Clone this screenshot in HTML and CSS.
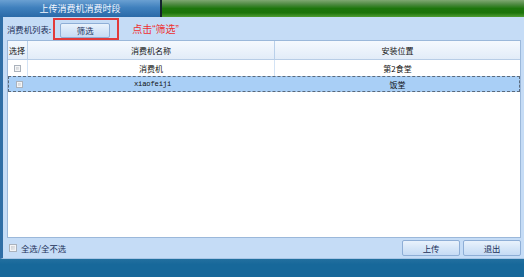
FILE: index.html
```html
<!DOCTYPE html>
<html lang="zh-CN">
<head>
<meta charset="utf-8">
<link rel="stylesheet" href="styles.css">
</head>
<body>
<div class="window">
  <div class="titlebar">
    <div class="tab">上传消费机消费时段</div>
    <div class="sep"></div>
    <div class="green"></div>
  </div>
  <div class="main">
    <div class="toolbar">
      <span class="label">消费机列表:</span>
      <div class="highlight"><button class="btn filter">筛选</button></div>
      <span class="hint">点击<span class="q">“</span>筛选<span class="q">”</span></span>
    </div>
    <div class="grid">
      <div class="row head">
        <div class="cell c1">选择</div>
        <div class="cell c2">消费机名称</div>
        <div class="cell c3">安装位置</div>
      </div>
      <div class="row">
        <div class="cell c1"><span class="chk"></span></div>
        <div class="cell c2">消费机</div>
        <div class="cell c3">第2食堂</div>
      </div>
      <div class="row sel">
        <div class="cell c1"><span class="chk"></span></div>
        <div class="cell c2 mono">xiaofeiji</div>
        <div class="cell c3">饭堂</div>
      </div>
    </div>
    <div class="footer">
      <span class="chk"></span>
      <span class="label all">全选/全不选</span>
      <div class="spacer"></div>
      <button class="btn act">上传</button>
      <button class="btn act">退出</button>
    </div>
  </div>
  <div class="bottom"></div>
</div>
</body>
</html>
```
FILE: styles.css
```css
* { box-sizing: border-box; }
html, body { margin: 0; padding: 0; }
body {
  width: 524px;
  height: 277px;
  overflow: hidden;
  font-family: "Noto Sans CJK SC", "Noto Sans", sans-serif;
  font-size: 8px;
  color: #111;
}
.window {
  display: flex;
  flex-direction: column;
  height: 277px;
}
.titlebar {
  height: 17px;
  display: flex;
}
.tab {
  width: 160px;
  background: linear-gradient(#6aa0d2, #3f80bd 45%, #2a6aa8);
  color: #f4f8ff;
  font-size: 9px;
  line-height: 17px;
  text-align: center;
}
.sep {
  width: 2px;
  background: #14222e;
}
.green {
  flex: 1;
  background: linear-gradient(#7fa872 0%, #4e8a42 25%, #1d760c 50%, #1b740a 75%, #4f9c34 100%);
}
.main {
  flex: 1;
  display: flex;
  flex-direction: column;
  background: #c5dcf6;
  border-left: 3px solid #2f6ea6;
  border-bottom: 1px solid #a8c6e6;
  padding: 0 3px 0 4px;
}
.toolbar {
  height: 23px;
  display: flex;
  align-items: center;
}
.label {
  color: #1b2f58;
  font-size: 8.4px;
}
.highlight {
  align-self: flex-end;
  margin-left: 2px;
  width: 66px;
  height: 22px;
  border: 2px solid #e23a3a;
  padding: 3px 0 0 5px;
}
.btn {
  font-family: "Noto Sans CJK SC", sans-serif;
  font-size: 8.4px;
  color: #1b2f58;
  border: 1px solid #8eaed6;
  border-radius: 2px;
  background: linear-gradient(#e9f2fc, #d6e6f8 50%, #c6dbf4);
  padding: 0;
  line-height: 13px;
}
.filter {
  width: 50px;
  height: 15px;
  display: block;
}
.hint {
  margin-left: 13px;
  color: #ee3030;
  font-size: 10px;
}
.hint .q {
  font-family: "Liberation Sans", sans-serif;
}
.grid {
  height: 198px;
  background: #fff;
  border: 1px solid #9bb8da;
}
.row {
  display: grid;
  grid-template-columns: 20px 247px 1fr;
  height: 16px;
  align-items: center;
}
.row.head {
  height: 19px;
  background: linear-gradient(#f5f9fe, #e2ecf8);
  border-bottom: 1px solid #b8cde6;
}
.cell {
  text-align: center;
  height: 100%;
  display: flex;
  align-items: center;
  justify-content: center;
}
.row.head .c1, .row.head .c2 { border-right: 1px solid #b9d0ea; }
.row:not(.head):not(.sel) .c1, .row:not(.head):not(.sel) .c2 { border-right: 1px solid #d3e3f5; }
.row.head .c1 { justify-content: flex-start; padding-left: 1px; }
.row.sel {
  background: #a9cff6;
  border: 1px dashed #5a6a7c;
  height: 16px;
}
.mono {
  font-family: "Liberation Mono", monospace;
  font-size: 7.2px;
  letter-spacing: -0.2px;
}
.chk {
  display: inline-block;
  width: 7px;
  height: 7px;
  border: 1px solid #aab2bc;
  background: linear-gradient(135deg, #c9ccd0, #eef0f2);
  box-shadow: inset 0 0 0 1px #f4f5f6;
}
.footer {
  height: 20px;
  display: flex;
  align-items: center;
}
.footer .chk {
  margin-left: 2px;
  width: 8px;
  height: 8px;
}
.all {
  margin-left: 4px;
}
.spacer { flex: 1; }
.act {
  width: 58px;
  height: 16px;
  margin-left: 3px;
}
.bottom {
  height: 18px;
  background: linear-gradient(#23709f, #17689a 30%, #17689a);
}
```
